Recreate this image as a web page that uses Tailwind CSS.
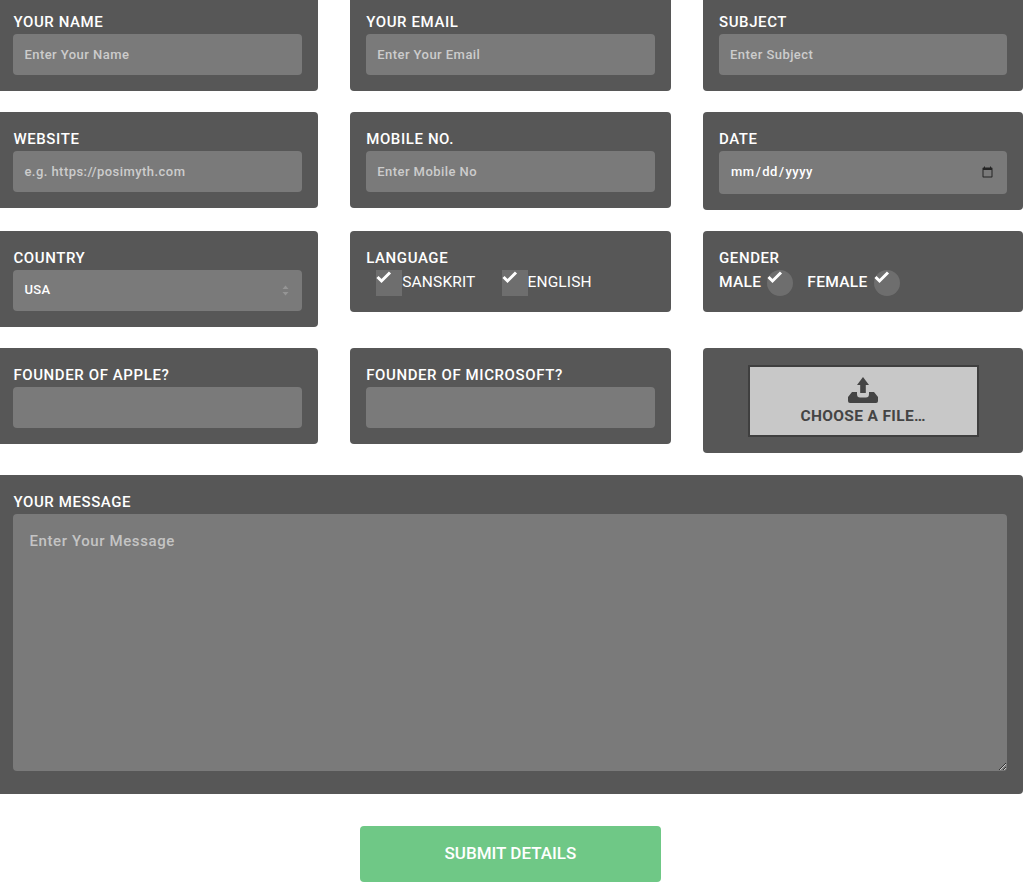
<!DOCTYPE html>
<html lang="en">
  <head>
    <meta charset="UTF-8" />
    <meta name="viewport" content="width=device-width, initial-scale=1.0" />
    <title>Contact Form</title>
    <script src="https://cdn.jsdelivr.net/npm/@tailwindcss/browser@4"></script>
  </head>

  <body class="bg-white font-['Roboto',sans-serif] overflow-hidden">
    <form class="w-[1026px] -ml-[2.6px] -mt-[5px]">
      <div class="grid grid-cols-3 gap-x-[32.4px] gap-y-[21.5px] items-start">
        <div class="bg-[#575757] rounded-[4px] px-4 pt-[16.25px] pb-4">
          <label class="block h-[22.25px] leading-[23px] text-[15px] font-medium tracking-[0.6px] text-white">YOUR NAME</label>
          <input type="text" placeholder="Enter Your Name" class="block w-full h-[41px] px-[11px] bg-[#7a7a7a] rounded-[4px] text-[13px] font-medium tracking-[0.45px] text-white placeholder:text-[#cccccc] outline-none" />
        </div>
        <div class="bg-[#575757] rounded-[4px] px-4 pt-[16.25px] pb-4">
          <label class="block h-[22.25px] leading-[23px] text-[15px] font-medium tracking-[0.6px] text-white">YOUR EMAIL</label>
          <input type="text" placeholder="Enter Your Email" class="block w-full h-[41px] px-[11px] bg-[#7a7a7a] rounded-[4px] text-[13px] font-medium tracking-[0.45px] text-white placeholder:text-[#cccccc] outline-none" />
        </div>
        <div class="bg-[#575757] rounded-[4px] px-4 pt-[16.25px] pb-4">
          <label class="block h-[22.25px] leading-[23px] text-[15px] font-medium tracking-[0.6px] text-white">SUBJECT</label>
          <input type="text" placeholder="Enter Subject" class="block w-full h-[41px] px-[11px] bg-[#7a7a7a] rounded-[4px] text-[13px] font-medium tracking-[0.45px] text-white placeholder:text-[#cccccc] outline-none" />
        </div>

        <div class="bg-[#575757] rounded-[4px] px-4 pt-[16.25px] pb-4">
          <label class="block h-[22.25px] leading-[23px] text-[15px] font-medium tracking-[0.6px] text-white">WEBSITE</label>
          <input type="text" placeholder="e.g. https://posimyth.com" class="block w-full h-[41px] px-[11px] bg-[#7a7a7a] rounded-[4px] text-[13px] font-medium tracking-[0.45px] text-white placeholder:text-[#cccccc] outline-none" />
        </div>
        <div class="bg-[#575757] rounded-[4px] px-4 pt-[16.25px] pb-4">
          <label class="block h-[22.25px] leading-[23px] text-[15px] font-medium tracking-[0.6px] text-white">MOBILE NO.</label>
          <input type="text" placeholder="Enter Mobile No" class="block w-full h-[41px] px-[11px] bg-[#7a7a7a] rounded-[4px] text-[13px] font-medium tracking-[0.45px] text-white placeholder:text-[#cccccc] outline-none" />
        </div>
        <div class="bg-[#575757] rounded-[4px] px-4 pt-[16.25px] pb-4">
          <label class="block h-[22.25px] leading-[23px] text-[15px] font-medium tracking-[0.6px] text-white">DATE</label>
          <input type="date" class="block w-full h-[43px] px-[11px] bg-[#7a7a7a] rounded-[4px] text-[13px] font-medium tracking-[0.5px] text-white outline-none [&::-webkit-calendar-picker-indicator]:opacity-70" />
        </div>

        <div class="bg-[#575757] rounded-[4px] px-4 pt-[16.25px] pb-4">
          <label class="block h-[22.25px] leading-[23px] text-[15px] font-medium tracking-[0.6px] text-white">COUNTRY</label>
          <div class="relative">
            <select class="block w-full h-[41px] px-[11px] bg-[#7a7a7a] rounded-[4px] text-[13px] font-medium tracking-[0.3px] text-white appearance-none outline-none">
              <option>USA</option>
            </select>
            <svg class="absolute right-[13px] top-[15px] w-[7px] h-[11px]" viewBox="0 0 7 11" fill="#959595">
              <path d="M3.5 0.5 L6.5 4 H0.5 Z M3.5 10.5 L0.5 7 H6.5 Z" />
            </svg>
          </div>
        </div>
        <div class="bg-[#575757] rounded-[4px] px-4 pt-[16.25px] pb-4">
          <label class="block h-[22.25px] leading-[23px] text-[15px] font-medium tracking-[0.6px] text-white">LANGUAGE</label>
          <div class="flex items-center h-[26px] pl-[10px] gap-[26px] text-white text-[15.5px] tracking-[0.15px]">
            <div class="flex items-center">
              <span class="relative block w-[26px] h-[26px] bg-[#6e6e6e]">
                <svg class="absolute left-0 top-[1px] w-[16px] h-[14px]" viewBox="0 0 16 14" fill="none" stroke="#ffffff" stroke-width="3"><path d="M1.5 6 L5.5 10 L14 1.5" /></svg>
              </span>
              <span>SANSKRIT</span>
            </div>
            <div class="flex items-center">
              <span class="relative block w-[26px] h-[26px] bg-[#6e6e6e]">
                <svg class="absolute left-0 top-[1px] w-[16px] h-[14px]" viewBox="0 0 16 14" fill="none" stroke="#ffffff" stroke-width="3"><path d="M1.5 6 L5.5 10 L14 1.5" /></svg>
              </span>
              <span>ENGLISH</span>
            </div>
          </div>
        </div>
        <div class="bg-[#575757] rounded-[4px] px-4 pt-[16.25px] pb-4">
          <label class="block h-[22.25px] leading-[23px] text-[15px] font-medium tracking-[0.6px] text-white">GENDER</label>
          <div class="flex items-center h-[26px] gap-[14px] text-white text-[15.5px] font-medium tracking-[0.3px]">
            <div class="flex items-center gap-[6px]">
              <span>MALE</span>
              <span class="relative block w-[26px] h-[26px] rounded-full bg-[#6e6e6e]">
                <svg class="absolute left-0 top-[1px] w-[16px] h-[14px]" viewBox="0 0 16 14" fill="none" stroke="#ffffff" stroke-width="3"><path d="M1.5 6 L5.5 10 L14 1.5" /></svg>
              </span>
            </div>
            <div class="flex items-center gap-[6px]">
              <span>FEMALE</span>
              <span class="relative block w-[26px] h-[26px] rounded-full bg-[#6e6e6e]">
                <svg class="absolute left-0 top-[1px] w-[16px] h-[14px]" viewBox="0 0 16 14" fill="none" stroke="#ffffff" stroke-width="3"><path d="M1.5 6 L5.5 10 L14 1.5" /></svg>
              </span>
            </div>
          </div>
        </div>

        <div class="bg-[#575757] rounded-[4px] px-4 pt-[16.25px] pb-4">
          <label class="block h-[22.25px] leading-[23px] text-[15px] font-medium tracking-[0.6px] text-white">FOUNDER OF APPLE?</label>
          <input type="text" class="block w-full h-[41px] px-[11px] bg-[#7a7a7a] rounded-[4px] outline-none" />
        </div>
        <div class="bg-[#575757] rounded-[4px] px-4 pt-[16.25px] pb-4">
          <label class="block h-[22.25px] leading-[23px] text-[15px] font-medium tracking-[0.6px] text-white">FOUNDER OF MICROSOFT?</label>
          <input type="text" class="block w-full h-[41px] px-[11px] bg-[#7a7a7a] rounded-[4px] outline-none" />
        </div>
        <div class="bg-[#575757] rounded-[4px] pt-[16.5px] pb-4 flex justify-center">
          <div class="w-[231px] h-[72px] bg-[#c8c8c8] border-2 border-[#3f3f3f] flex flex-col items-center pt-[10px]">
            <svg class="w-[30px] h-[26px]" viewBox="0 0 30 26" fill="#444444">
              <path d="M15 0 L21 8 H17.8 V16 H12.2 V8 H9 Z" />
              <path d="M4 15 H9 V17 Q9 20.5 12 20.5 H18 Q21 20.5 21 17 V15 H26 L30 20 V24 Q30 26 28 26 H2 Q0 26 0 24 V20 Z" />
            </svg>
            <span class="mt-[2px] text-[15.5px] leading-[22px] font-bold tracking-[0.35px] text-[#444444]">CHOOSE A FILE…</span>
          </div>
        </div>
      </div>

      <div class="mt-[22.5px] bg-[#575757] rounded-[4px] px-4 pt-[15px] pb-[23px]">
        <label class="block h-[24px] leading-[24px] text-[15px] font-medium tracking-[0.6px] text-white">YOUR MESSAGE</label>
        <textarea placeholder="Enter Your Message" class="block w-full h-[257px] px-4 py-4 bg-[#7a7a7a] rounded-[4px] text-[15px] font-medium tracking-[0.6px] text-white placeholder:text-[#c4c4c4] outline-none"></textarea>
      </div>

      <div class="flex justify-center mt-8">
        <button type="button" class="w-[301px] h-[56px] bg-[#6fc886] rounded-[4px] text-white text-[17px] font-medium">SUBMIT DETAILS</button>
      </div>
    </form>
  </body>
</html>
